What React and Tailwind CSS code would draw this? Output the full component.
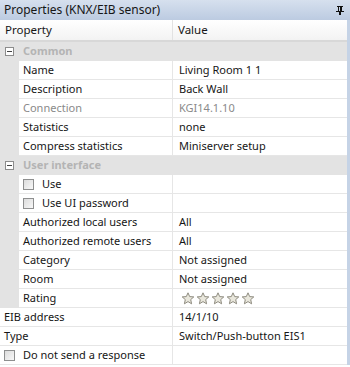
import React from "react";

const rows = [
  { type: "cat", name: "Common" },
  { name: "Name", value: "Living Room 1 1", indent: true },
  { name: "Description", value: "Back Wall", indent: true },
  { name: "Connection", value: "KGI14.1.10", indent: true, disabled: true },
  { name: "Statistics", value: "none", indent: true },
  { name: "Compress statistics", value: "Miniserver setup", indent: true },
  { type: "cat", name: "User interface" },
  { name: "Use", value: "", indent: true, check: true },
  { name: "Use UI password", value: "", indent: true, check: true },
  { name: "Authorized local users", value: "All", indent: true },
  { name: "Authorized remote users", value: "All", indent: true },
  { name: "Category", value: "Not assigned", indent: true },
  { name: "Room", value: "Not assigned", indent: true },
  { name: "Rating", value: "stars", indent: true },
  { name: "EIB address", value: "14/1/10" },
  { name: "Type", value: "Switch/Push-button EIS1" },
  { name: "Do not send a response", value: "", check: true },
];

const Check = () => (
  <span className="inline-block w-[11px] h-[11px] border border-[#8e8f8f] bg-gradient-to-br from-[#dcdcdc] to-[#f8f8f8] mr-[8px] shrink-0" />
);

const Star = () => (
  <svg width="14" height="13" viewBox="0 0 14 13" className="mr-[1px]">
    <polygon
      points="7,0.8 8.7,4.6 12.8,4.9 9.7,7.6 10.6,11.8 7,9.6 3.4,11.8 4.3,7.6 1.2,4.9 5.3,4.6"
      fill="#e9e7dc"
      stroke="#8f8c80"
      strokeWidth="1"
      strokeLinejoin="round"
    />
  </svg>
);

const Minus = () => (
  <span className="relative inline-block w-[9px] h-[9px] border border-[#8c8c8c] bg-white mr-[9px] shrink-0">
    <span className="absolute left-[1px] top-[3px] w-[5px] h-[1px] bg-[#444]" />
  </span>
);

export default function App() {
  return (
    <div
      className="w-[350px] h-[367px] overflow-hidden bg-white text-[11px] text-[#161616]"
      style={{ fontFamily: '"Noto Sans", "Liberation Sans", sans-serif' }}
    >
      <div className="h-[20px] flex items-center justify-between pl-[4px] pr-[6px] bg-gradient-to-b from-[#d6e0ee] to-[#bccbe1]">
        <span className="leading-none text-[12px]">Properties (KNX/EIB sensor)</span>
        <svg width="8" height="9" viewBox="0 0 8 9">
          <rect x="1" y="0" width="6" height="1" fill="#111" />
          <rect x="2" y="1" width="1" height="4" fill="#111" />
          <rect x="4" y="1" width="2" height="4" fill="#111" />
          <rect x="0" y="5" width="8" height="1" fill="#111" />
          <rect x="3" y="6" width="2" height="3" fill="#111" />
        </svg>
      </div>
      <div className="flex">
        <div className="flex-1">
          <div className="h-[22px] flex border-b-2 border-[#d8d8d8] bg-gradient-to-b from-white to-[#f3f3f3] text-[11.5px]">
            <div className="w-[173px] pl-[5px] flex items-center border-r border-[#e2e2e2]">Property</div>
            <div className="flex-1 pl-[5px] flex items-center">Value</div>
          </div>
          {rows.map((r, i) =>
            r.type === "cat" ? (
              <div key={i} className="h-[19px] flex items-center bg-[#e3e3e3] pl-[5px]">
                <Minus />
                <span className="font-bold text-[#b4b4b4]">{r.name}</span>
              </div>
            ) : (
              <div key={i} className="h-[19px] flex">
                {r.indent && <div className="w-[19px] bg-[#e3e3e3]" />}
                <div
                  className={
                    "flex items-center border-b border-r border-[#e6e6e6] " +
                    (r.indent ? "w-[154px] pl-[4px]" : "w-[173px] pl-[4px]") +
                    (r.disabled ? " text-[#8a8a8a]" : "")
                  }
                >
                  {r.check && <Check />}
                  <span className="whitespace-nowrap">{r.name}</span>
                </div>
                <div className={"flex-1 flex items-center pl-[6px] border-b border-[#e6e6e6]" + (r.disabled ? " text-[#8a8a8a]" : "")}>
                  {r.value === "stars" ? (
                    <span className="flex pl-[2px]">
                      <Star />
                      <Star />
                      <Star />
                      <Star />
                      <Star />
                    </span>
                  ) : (
                    <span className="whitespace-nowrap">{r.value}</span>
                  )}
                </div>
              </div>
            )
          )}
        </div>
        <div className="w-[3px] bg-[#c5d3e6]" />
      </div>
    </div>
  );
}
